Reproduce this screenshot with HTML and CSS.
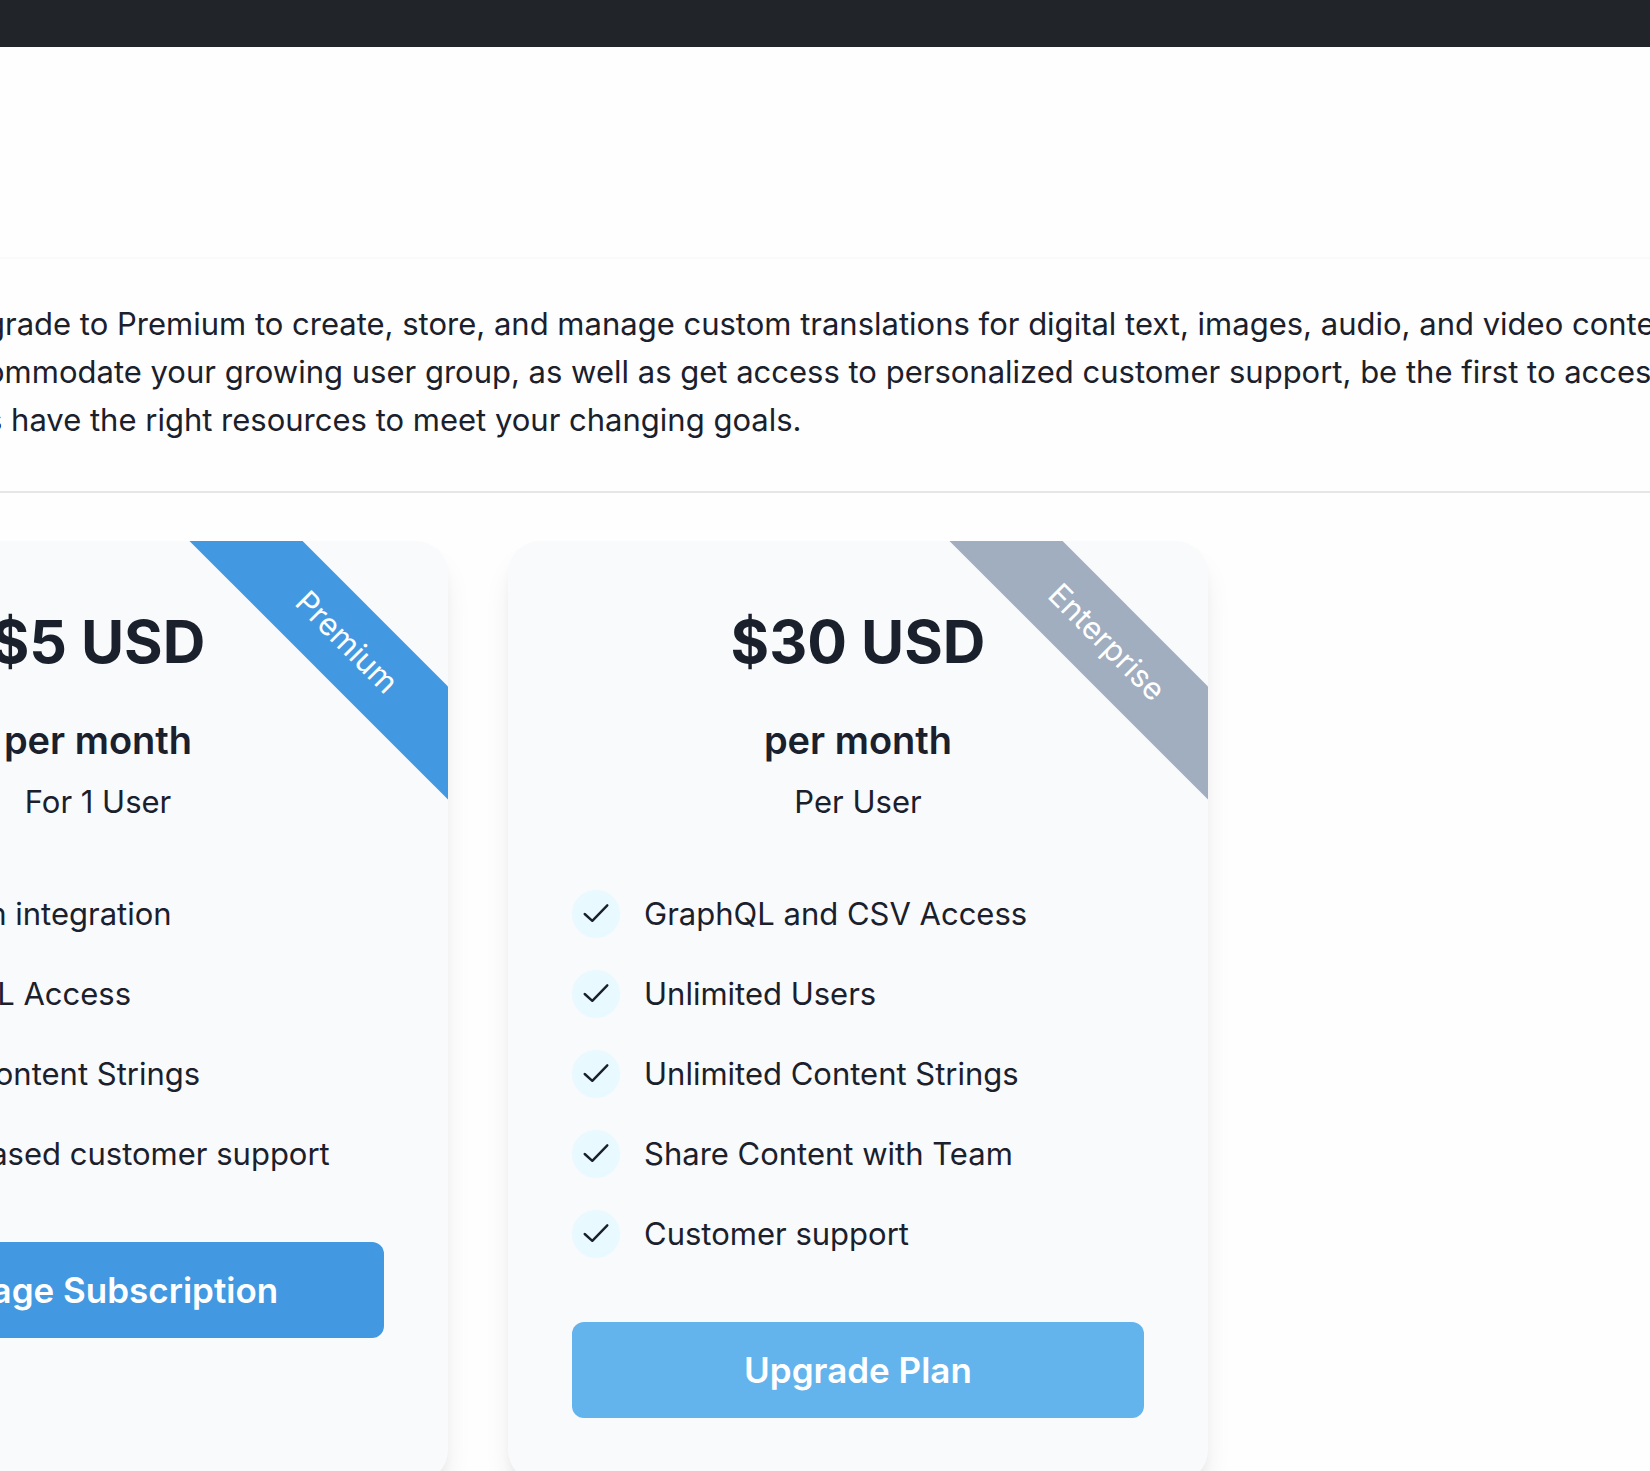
FILE: index.html
```html
<!DOCTYPE html>
<html lang="en">
<head>
    <meta charset="UTF-8">
    <meta name="viewport" content="width=device-width, initial-scale=1.0">
    <title>Plans</title>
    <link rel="stylesheet" href="styles.css">
</head>
<body>
    <svg class="sprite" aria-hidden="true">
        <symbol id="check" viewBox="0 0 48 48">
            <path d="M12.7 24 L20.3 30.8 L35.3 15.3" />
        </symbol>
    </svg>

    <header class="topbar"></header>
    <div class="title"></div>

    <main>
        <!-- intro text -->
        <p class="intro">
            grade to Premium to create, store, and manage custom translations for digital text, images, audio, and video content<br>
            ommodate your growing user group, as well as get access to personalized customer support, be the first to access<br>
            s have the right resources to meet your changing goals.
        </p>

        <!-- plan cards -->
        <div class="plans">
            <section class="card">
                <div class="ribbon premium">Premium</div>
                <h2 class="price">$5 USD</h2>
                <h3 class="period">per month</h3>
                <p class="users">For 1 User</p>
                <ul class="features">
                    <li><svg class="check"><use href="#check" /></svg>Platform integration</li>
                    <li><svg class="check"><use href="#check" /></svg>GraphQL Access</li>
                    <li><svg class="check"><use href="#check" /></svg>1,000 Content Strings</li>
                    <li><svg class="check"><use href="#check" /></svg>Email based customer support</li>
                </ul>
                <button class="btn manage" type="button">Manage Subscription</button>
            </section>

            <section class="card">
                <div class="ribbon enterprise">Enterprise</div>
                <h2 class="price">$30 USD</h2>
                <h3 class="period">per month</h3>
                <p class="users">Per User</p>
                <ul class="features">
                    <li><svg class="check"><use href="#check" /></svg>GraphQL and CSV Access</li>
                    <li><svg class="check"><use href="#check" /></svg>Unlimited Users</li>
                    <li><svg class="check"><use href="#check" /></svg>Unlimited Content Strings</li>
                    <li><svg class="check"><use href="#check" /></svg>Share Content with Team</li>
                    <li><svg class="check"><use href="#check" /></svg>Customer support</li>
                </ul>
                <button class="btn upgrade" type="button">Upgrade Plan</button>
            </section>
        </div>
    </main>
</body>
</html>
```
FILE: styles.css
```css
*{
    margin: 0;
    padding: 0;
    box-sizing: border-box;
}
body{
    background-color: #fefefe;
    color: #1a202c;
    font-family: Inter, "Liberation Sans", sans-serif;
    font-size: 31px;
    line-height: 48px;
    height: 100vh;
    overflow: hidden;
}
.sprite{
    display: none;
}
.topbar{
    height: 47px;
    background-color: #212529;
}
.title{
    height: 212px;
    border-bottom: 2px solid #fafafa;
}

/* intro text */
.intro{
    padding: 41px 0 47px;
    border-bottom: 2px solid #e6e6e6;
    margin-left: -14px;
    white-space: nowrap;
}

/* plan cards */
.plans{
    display: flex;
    gap: 60px;
    margin: 48px 0 0 -252px;
}
.card{
    position: relative;
    flex: none;
    width: 700px;
    padding: 64px;
    border-radius: 32px;
    background-color: #f9fafc;
    box-shadow: 0 20px 30px -6px rgba(0,0,0,0.1), 0 8px 12px -4px rgba(0,0,0,0.05);
    overflow: hidden;
    text-align: center;
}
.ribbon{
    position: absolute;
    top: 61px;
    right: -99px;
    width: 400px;
    padding: 16px 0;
    color: #fff;
    transform: rotate(45deg);
}
.premium{
    background-color: #4299e1;
}
.enterprise{
    background-color: #a0aec0;
}
.price{
    font-size: 59px;
    line-height: 74px;
    font-weight: 700;
}
.period{
    margin: 37px 0 14px;
    font-size: 38px;
    line-height: 48px;
    font-weight: 600;
}
.features{
    display: flex;
    flex-direction: column;
    gap: 32px;
    margin: 64px 0;
    list-style: none;
    text-align: left;
}
.features li{
    display: flex;
    align-items: center;
    gap: 24px;
}
.check{
    width: 48px;
    height: 48px;
    border-radius: 50%;
    background-color: #e8f9ff;
    fill: none;
    stroke: #1a202c;
    stroke-width: 2.4;
    stroke-linecap: round;
    stroke-linejoin: round;
}
.btn{
    display: block;
    width: 100%;
    height: 96px;
    border: none;
    border-radius: 12px;
    color: #fff;
    font-family: inherit;
    font-size: 35px;
    font-weight: 600;
    cursor: pointer;
}
.manage{
    background-color: #4299e1;
}
.upgrade{
    background-color: #63b3ed;
}
```
